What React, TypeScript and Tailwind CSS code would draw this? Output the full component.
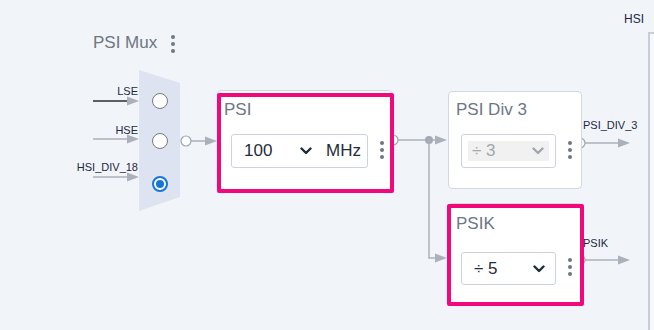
import React from 'react';

const font = { fontFamily: '"Liberation Sans", Arial, sans-serif' };

/** 縦三点メニュー */
function Kebab({ x, y }: { x: number; y: number }) {
  return (
    <div className="absolute flex flex-col gap-[3px]" style={{ left: x - 2, top: y - 2 }}>
      <span className="block w-[4px] h-[4px] rounded-full bg-[#6f7782]" />
      <span className="block w-[4px] h-[4px] rounded-full bg-[#6f7782]" />
      <span className="block w-[4px] h-[4px] rounded-full bg-[#6f7782]" />
    </div>
  );
}

function Chevron({ color }: { color: string }) {
  return (
    <svg width="12" height="8" viewBox="0 0 12 8" className="shrink-0">
      <path d="M1.5 1.5 L6 6 L10.5 1.5" fill="none" stroke={color} strokeWidth="2.4" strokeLinecap="round" strokeLinejoin="round" />
    </svg>
  );
}

function Radio({ checked }: { checked?: boolean }) {
  return (
    <div
      className={
        'w-[16px] h-[16px] rounded-full bg-white flex items-center justify-center ' +
        (checked ? 'border-2 border-[#1576d8]' : 'border-[1.5px] border-[#7a7a7a]')
      }
    >
      {checked && <span className="block w-[8px] h-[8px] rounded-full bg-[#1576d8]" />}
    </div>
  );
}

function Arrow({ x, y }: { x: number; y: number }) {
  return <polygon points={`${x - 12},${y - 4.5} ${x},${y} ${x - 12},${y + 4.5}`} fill="#abb1ba" />;
}

function Wires() {
  const c = '#abb1ba';
  return (
    <svg className="absolute left-0 top-0" width="654" height="330">
      <polygon points="139,70 180,83 180,197 139,211" fill="#dde3f1" />
      <line x1="93" y1="101" x2="128" y2="101" stroke="#5b5e63" strokeWidth="2" />
      <Arrow x={139} y={101} />
      <line x1="93" y1="139" x2="128" y2="139" stroke={c} strokeWidth="1.5" />
      <Arrow x={139} y={139} />
      <line x1="93" y1="177" x2="128" y2="177" stroke={c} strokeWidth="1.5" />
      <Arrow x={139} y={177} />

      <line x1="191" y1="141" x2="206" y2="141" stroke={c} strokeWidth="1.5" />
      <circle cx="186" cy="141" r="5" fill="#fff" stroke="#a0a6ae" strokeWidth="1.2" />
      <Arrow x={217} y={141} />

      <line x1="398" y1="140" x2="436" y2="140" stroke={c} strokeWidth="1.5" />
      <circle cx="429" cy="140" r="4" fill="#a4aab3" />
      <Arrow x={447} y={140} />
      <polyline points="429,140 429,258 436,258" fill="none" stroke={c} strokeWidth="1.5" />
      <Arrow x={447} y={258} />
      <circle cx="393" cy="140" r="5" fill="#fff" stroke="#a0a6ae" strokeWidth="1.2" />

      <line x1="585" y1="143" x2="619" y2="143" stroke={c} strokeWidth="1.5" />
      <circle cx="580" cy="143" r="5" fill="#fff" stroke="#a0a6ae" strokeWidth="1.2" />
      <Arrow x={630} y={143} />

      <line x1="585" y1="260" x2="619" y2="260" stroke={c} strokeWidth="1.5" />
      <circle cx="580" cy="260" r="5" fill="#fff" stroke="#a0a6ae" strokeWidth="1.2" />
      <Arrow x={630} y={260} />
    </svg>
  );
}

export default function App(): JSX.Element {
  return (
    <div className="relative w-[654px] h-[330px] overflow-hidden bg-[#f1f4f9]" style={font}>
      {/* 右側の HSI パネル */}
      <div className="absolute left-[624px] top-[13px] text-[12px] leading-none text-[#1c2942]">HSI</div>
      <div className="absolute left-[648px] top-[32px] w-[20px] h-[320px] border-l-2 border-t-2 border-[#c9ced6] bg-[#f7f8fb]" />

      <Wires />

      {/* PSI Mux */}
      <div className="absolute left-[93px] top-[34px] flex items-start gap-[14px]">
        <span className="text-[17px] leading-none text-[#6e7681]">PSI Mux</span>
        <span className="flex flex-col gap-[3px] pt-[1px]">
          <span className="block w-[4px] h-[4px] rounded-full bg-[#6f7782]" />
          <span className="block w-[4px] h-[4px] rounded-full bg-[#6f7782]" />
          <span className="block w-[4px] h-[4px] rounded-full bg-[#6f7782]" />
        </span>
      </div>
      <div className="absolute right-[516px] top-[86px] flex flex-col items-end text-[11px] leading-none text-[#1c2942]">
        <span>LSE</span>
        <span className="mt-[28px]">HSE</span>
        <span className="mt-[26px]">HSI_DIV_18</span>
      </div>
      <div className="absolute left-[152px] top-[93px] flex flex-col">
        <Radio />
        <div className="mt-[24px]"><Radio /></div>
        <div className="mt-[27px]"><Radio checked /></div>
      </div>

      {/* PSI */}
      <div className="absolute left-[217px] top-[90px] w-[176px] h-[100px] bg-white border border-[#d3d8e0] rounded-[4px] px-[6px] pt-[10px]">
        <div className="text-[17px] leading-none text-[#6b7785]">PSI</div>
        <div className="mt-[16px] ml-[7px] w-[137px] h-[34px] border border-[#cdd3dc] rounded-[3px] flex items-center pl-[12px] pr-[4px] text-[17px] text-[#1f2d3d]">
          <span className="w-[56px] shrink-0">100</span>
          <Chevron color="#1f2d3d" />
          <span className="ml-[14px] shrink-0">MHz</span>
        </div>
      </div>
      <div className="absolute left-[217px] top-[93px] w-[177px] h-[100px] border-4 border-[#f0087c] rounded-[2px]" />
      <Kebab x={382} y={143} />

      {/* PSI Div 3 */}
      <div className="absolute left-[448px] top-[91px] w-[134px] h-[98px] bg-white border border-[#d3d8e0] rounded-[4px] px-[7px] pt-[9px]">
        <div className="text-[17px] leading-none text-[#6b7785]">PSI Div 3</div>
        <div className="mt-[16px] ml-[5px] w-[95px] h-[34px] border border-[#cdd3dc] rounded-[3px] p-[6px]">
          <div className="h-[20px] bg-[#f1f1f1] flex items-center justify-between pl-[4px] pr-[5px] text-[17px] text-[#a3a7ad]">
            <span>÷ 3</span>
            <Chevron color="#a3a7ad" />
          </div>
        </div>
      </div>
      <Kebab x={570} y={143} />
      <div className="absolute left-[583px] top-[120px] text-[11px] leading-none text-[#1c2942]">PSI_DIV_3</div>

      {/* PSIK */}
      <div className="absolute left-[448px] top-[203px] w-[134px] h-[101px] bg-white border border-[#d3d8e0] rounded-[4px] px-[7px] pt-[11px]">
        <div className="text-[17px] leading-none text-[#6b7785]">PSIK</div>
        <div className="mt-[20px] ml-[5px] w-[95px] h-[33px] border border-[#cdd3dc] rounded-[3px] flex items-center justify-between pl-[12px] pr-[10px] text-[17px] text-[#1f2d3d]">
          <span>÷ 5</span>
          <Chevron color="#1f2d3d" />
        </div>
      </div>
      <div className="absolute left-[447px] top-[204px] w-[137px] h-[102px] border-4 border-[#f0087c] rounded-[2px]" />
      <Kebab x={570} y={260} />
      <div className="absolute left-[583px] top-[238px] text-[11px] leading-none text-[#1c2942]">PSIK</div>
    </div>
  );
}
